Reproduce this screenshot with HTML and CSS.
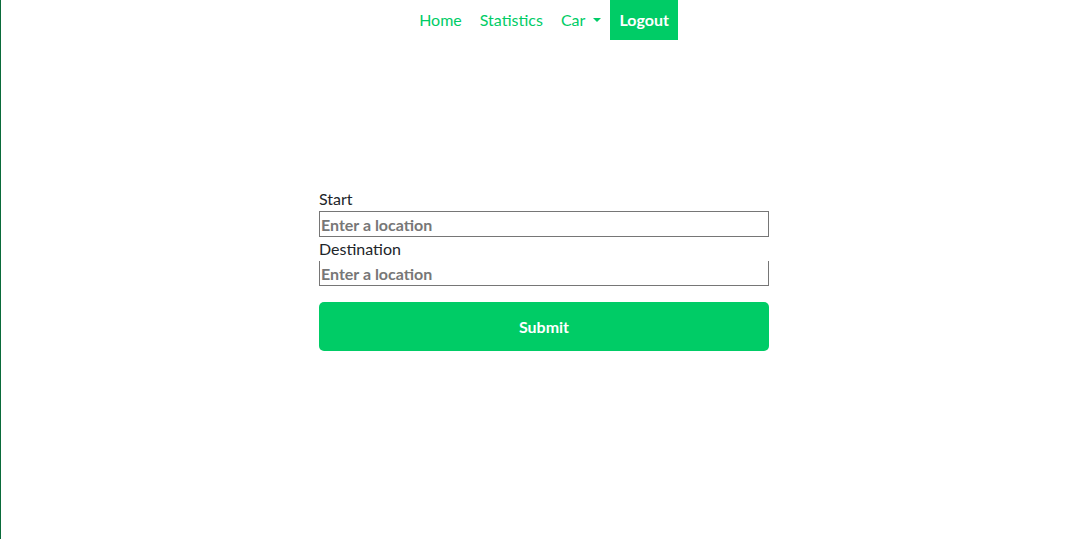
FILE: index.html
```html
<!DOCTYPE html>
<html>
<head>
<meta charset="utf-8">
<link rel="stylesheet" href="styles.css">
</head>
<body>
<div class="page">
  <nav class="nav">
    <a class="nav-link" href="#">Home</a>
    <a class="nav-link" href="#">Statistics</a>
    <a class="nav-link dropdown" href="#">Car <span class="caret"></span></a>
    <a class="nav-link active" href="#">Logout</a>
  </nav>
  <form class="route-form">
    <label class="field-label" for="start">Start</label>
    <input class="field" id="start" type="text" placeholder="Enter a location">
    <label class="field-label overlap" for="dest">Destination</label>
    <input class="field" id="dest" type="text" placeholder="Enter a location">
    <button class="submit" type="button">Submit</button>
  </form>
</div>
</body>
</html>
```

FILE: styles.css
```css
html, body {
  margin: 0;
  padding: 0;
  background: #fff;
}
body {
  font-family: Lato, "Noto Sans", sans-serif;
  font-size: 16px;
  color: #212529;
}
.page {
  height: 539px;
  box-shadow: inset 1px 0 0 #0a6b3a;
}
.nav {
  display: flex;
  justify-content: center;
  height: 40px;
}
.nav-link {
  display: flex;
  align-items: center;
  padding: 0 9px;
  line-height: 24px;
  color: #00cc66;
  text-decoration: none;
}
.nav-link.active {
  background: #00cc66;
  color: #fff;
  font-weight: 700;
}
.caret {
  display: inline-block;
  width: 0;
  height: 0;
  margin-left: 8px;
  border-left: 4px solid transparent;
  border-right: 4px solid transparent;
  border-top: 4px solid #00cc66;
  vertical-align: middle;
}
.route-form {
  width: 450px;
  margin: 147px auto 0;
  display: flex;
  flex-direction: column;
}
.field-label {
  line-height: 23px;
  height: 24px;
  position: relative;
  background: #fff;
  z-index: 1;
}
.field-label.overlap {
  margin-bottom: -1px;
}
.field {
  height: 26px;
  box-sizing: border-box;
  border: 1px solid #767676;
  padding: 0 1px;
  font-family: inherit;
  font-size: 16px;
  font-weight: 700;
  margin: 0;
  outline: none;
}
.field::placeholder {
  color: #777;
  font-weight: 700;
}
.submit {
  margin-top: 16px;
  height: 49px;
  border: none;
  border-radius: 5px;
  background: #00cc66;
  color: #fff;
  font-family: inherit;
  font-size: 16px;
  font-weight: 700;
}
```
